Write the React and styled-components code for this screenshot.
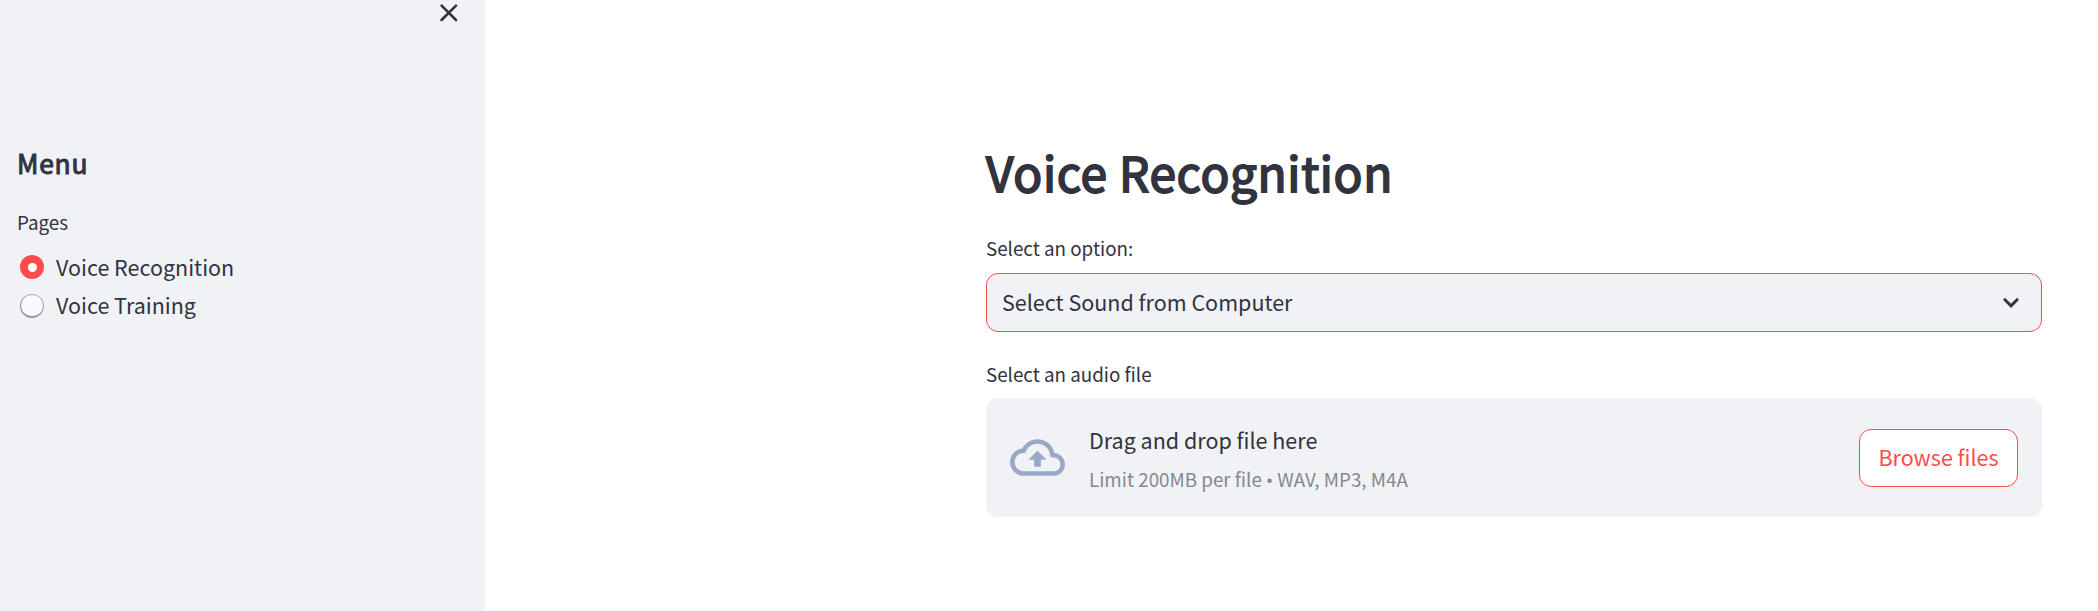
import React, { useState } from "react";
import styled, { createGlobalStyle } from "styled-components";

const Global = createGlobalStyle`
  * { box-sizing: border-box; }
  body {
    margin: 0;
    background: #fff;
    color: #31333f;
    font-family: "Noto Sans CJK SC", "Noto Sans", sans-serif;
  }
`;

const Page = styled.div`
  display: flex;
  height: 611px;
  overflow: hidden;
`;

const Sidebar = styled.aside`
  width: 485px;
  flex: none;
  background: #f0f2f6;
`;

const SidebarTop = styled.div`
  height: 145px;
  display: flex;
  justify-content: flex-end;
  align-items: flex-start;
  padding: 4px 27px 0 0;
`;

const CloseButton = styled.button`
  display: flex;
  padding: 0;
  border: 0;
  background: none;
  color: #31333f;
`;

const SidebarBody = styled.div`
  padding: 0 17px;
`;

const MenuTitle = styled.h2`
  margin: 0 0 26px;
  font-size: 26.4px;
  font-weight: 400;
  letter-spacing: 0.75px;
  -webkit-text-stroke: 1px currentColor;
  line-height: 36px;
`;

const Label = styled.div`
  font-size: 18.8px;
  line-height: 30px;
  white-space: nowrap;
`;

const RadioList = styled.div`
  margin-top: 11px;
`;

const RadioRow = styled.div`
  display: flex;
  align-items: center;
  height: 38.5px;
  padding-left: 3px;
  gap: 12px;
  font-size: 21.5px;
  line-height: 37px;
`;

const RadioText = styled.span`
  height: 38px;
  margin-top: -0.8px;
`;

const RadioMark = styled.span`
  width: 24px;
  height: 24px;
  border-radius: 50%;
  flex: none;
  display: flex;
  align-items: center;
  justify-content: center;
  background: ${(p) =>
    p.$on ? "#ff4b4b" : "linear-gradient(60deg, #8a8c94, #b0b2b9)"};

  &::after {
    content: "";
    width: ${(p) => (p.$on ? 9 : 21.2)}px;
    height: ${(p) => (p.$on ? 9 : 21.2)}px;
    border-radius: 50%;
    background: ${(p) => (p.$on ? "#fff" : "#f9fafb")};
  }
`;

const Main = styled.main`
  flex: 1;
  padding: 142px 56px 0 501px;
`;

const Title = styled.h1`
  margin: 0 0 31px;
  font-size: 47.8px;
  font-weight: 400;
  letter-spacing: 0.63px;
  -webkit-text-stroke: 1.8px currentColor;
  line-height: 60px;
  white-space: nowrap;
`;

const Select = styled.div`
  display: flex;
  align-items: center;
  justify-content: space-between;
  height: 59px;
  margin: 10px 0 27px;
  padding: 0 21px 0 15px;
  border: 1px solid #ff4b4b;
  border-radius: 12px;
  background: #f0f2f6;
  font-size: 21.5px;
`;

const SelectText = styled.span`
  height: 38px;
  line-height: 36px;
`;

const Dropzone = styled.section`
  display: flex;
  align-items: center;
  height: 119px;
  margin-top: 9px;
  padding: 0 24px;
  border-radius: 12px;
  background: #f0f2f6;
`;

const CloudIcon = styled.svg`
  width: 55px;
  height: 55px;
  margin-right: 24px;
  color: #9aa8c7;
`;

const DropText = styled.div`
  flex: 1;
`;

const DropTitle = styled.div`
  margin-bottom: 5px;
  font-size: 21.5px;
  line-height: 38px;
`;

const DropHint = styled(Label)`
  color: #86888f;
`;

const Bullet = styled.span`
  font-family: "Noto Sans", sans-serif;
`;

const BrowseButton = styled.button`
  width: 159px;
  height: 58px;
  padding: 0 0 2px;
  border: 1px solid #ff4b4b;
  border-radius: 12px;
  background: #fff;
  color: #ff4b4b;
  font: 400 21.5px/38px "Noto Sans CJK SC", "Noto Sans", sans-serif;
`;

const pages = ["Voice Recognition", "Voice Training"];

export default function App() {
  const [page, setPage] = useState(pages[0]);
  return (
    <>
      <Global />
      <Page>
        <Sidebar>
          <SidebarTop>
            <CloseButton aria-label="Close">
              <svg width="18" height="18" viewBox="0 0 18 18" fill="none" stroke="currentColor" strokeWidth="2.6" strokeLinecap="round">
                <path d="M1.6 1.6 16 16M16 1.6 1.6 16" />
              </svg>
            </CloseButton>
          </SidebarTop>
          <SidebarBody>
            <MenuTitle>Menu</MenuTitle>
            <Label>Pages</Label>
            <RadioList role="radiogroup">
              {pages.map((name) => (
                <RadioRow key={name} role="radio" aria-checked={page === name} onClick={() => setPage(name)}>
                  <RadioMark $on={page === name} />
                  <RadioText>{name}</RadioText>
                </RadioRow>
              ))}
            </RadioList>
          </SidebarBody>
        </Sidebar>
        <Main>
          <Title>{page}</Title>
          <Label>Select an option:</Label>
          <Select>
            <SelectText>Select Sound from Computer</SelectText>
            <svg width="18" height="12" viewBox="0 0 18 12" fill="none" stroke="currentColor" strokeWidth="3" strokeLinecap="round">
              <path d="M2.9 2.7 9 8.8l6.1-6.1" />
            </svg>
          </Select>
          <Label>Select an audio file</Label>
          <Dropzone>
            <CloudIcon viewBox="0 0 24 24" fill="currentColor">
              <path d="M19.35 10.04A7.49 7.49 0 0 0 12 4C9.11 4 6.6 5.64 5.35 8.04A5.994 5.994 0 0 0 0 14c0 3.31 2.69 6 6 6h13c2.76 0 5-2.24 5-5 0-2.64-2.05-4.78-4.65-4.96zM19 18H6c-2.21 0-4-1.79-4-4 0-2.05 1.53-3.76 3.56-3.97l1.07-.11.5-.95A5.469 5.469 0 0 1 12 6c2.62 0 4.88 1.86 5.39 4.43l.3 1.5 1.53.11A2.98 2.98 0 0 1 22 15c0 1.65-1.35 3-3 3zM8 13h2.55v3h2.9v-3H16l-4-4z" />
            </CloudIcon>
            <DropText>
              <DropTitle>Drag and drop file here</DropTitle>
              <DropHint>Limit 200MB per file <Bullet>•</Bullet> WAV, MP3, M4A</DropHint>
            </DropText>
            <BrowseButton>Browse files</BrowseButton>
          </Dropzone>
        </Main>
      </Page>
    </>
  );
}
